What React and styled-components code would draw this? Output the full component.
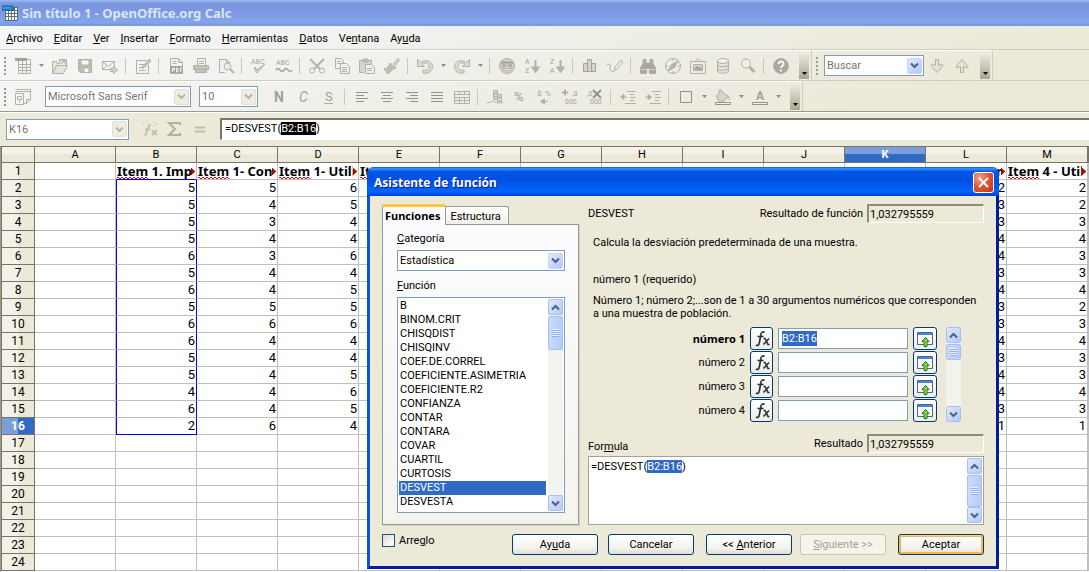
import { Fragment } from 'react';
import styled, { createGlobalStyle, css } from 'styled-components';

const GlobalStyle = createGlobalStyle`
  * {
    box-sizing: border-box;
  }

  body {
    margin: 0;
    background: #fff;
  }

  body, button, input, select, textarea {
    font-family: Roboto, 'Noto Sans', sans-serif;
    font-size: 11px;
    color: #000;
  }

  b {
    font-family: 'Noto Sans', sans-serif;
  }
`;

const boldFace = css`
  font-family: 'Noto Sans', sans-serif;
  font-weight: 700;
`;

const Page = styled.div`
  position: relative;
  display: flex;
  flex-direction: column;
  height: 100vh;
  overflow: hidden;
  cursor: default;
`;

/* ---------- window chrome ---------- */

const TitleBar = styled.header`
  display: flex;
  align-items: center;
  gap: 4px;
  flex: none;
  height: 26px;
  padding: 0 2px;
  background: linear-gradient(#9db9f0, #7a96df 14%, #7d98e2 45%, #82a6e8 85%, #7b94dc);
  color: #dce4f8;
  ${boldFace}
  font-size: 13px;
`;

const Chrome = styled.div`
  flex: none;
  background: linear-gradient(160deg, #f6f7f8 0%, #f0f0ec 35%, #ece9d8 80%);
`;

const MenuBar = styled.nav`
  display: flex;
  align-items: center;
  gap: 11px;
  height: 23px;
  padding: 1px 6px 0;
`;

const MenuLink = styled.a`
  color: #000;
  text-decoration: none;
`;

const ToolRow = styled.div`
  display: flex;
  border-top: 1px solid #d0ccc0;
`;

const Toolbar = styled.div`
  display: flex;
  align-items: center;
  height: 30px;
  padding-right: 2px;
  border-top: 1px solid #fff;
  border-right: 1px solid #d0ccc0;
`;

const Grip = styled.span`
  width: 2px;
  height: 18px;
  margin: 0 4px;
  background: repeating-linear-gradient(#9c9a8c 0 2px, transparent 2px 4px);
`;

const ToolButton = styled.button`
  display: flex;
  align-items: center;
  justify-content: center;
  flex: none;
  width: ${({ $narrow }) => ($narrow ? '12px' : '25px')};
  height: 24px;
  padding: 0;
  border: none;
  background: none;
`;

const Divider = styled.span`
  width: 1px;
  height: 16px;
  margin: 0 4px 0 3px;
  background: #cfc6b8;
`;

const Overflow = styled.button`
  display: flex;
  align-items: flex-end;
  justify-content: center;
  width: 10px;
  height: 26px;
  margin-left: 6px;
  padding: 0 0 4px;
  border: none;
  background: linear-gradient(#eeebdd, #a9a695);
`;

const Combo = styled.span`
  display: flex;
  align-items: center;
  flex: none;
  width: ${({ $width }) => $width};
  height: 21px;
  padding: 1px;
  margin: ${({ $margin }) => $margin || '0'};
  border: 1px solid #7f9db9;
  background: #fff;

  select {
    flex: 1;
    min-width: 0;
    height: 17px;
    padding: 0 1px;
    border: none;
    outline: none;
    appearance: none;
    background: none;
    color: ${({ $muted }) => ($muted ? '#77766e' : '#000')};
  }
`;

const arrowLook = {
  blue: css`
    border: 1px solid #c4d4fb;
    background: linear-gradient(135deg, #e1eafe, #aec8f7);
    color: #4d6185;
  `,
  gray: css`
    border: 1px solid #e2e0d4;
    background: #efede2;
    color: #b9b6a6;
  `,
};

const ArrowBox = styled.span`
  display: flex;
  align-items: center;
  justify-content: center;
  flex: none;
  width: 15px;
  height: 16px;
  border-radius: 2px;
  ${({ $look }) => arrowLook[$look]}
`;

const FormulaBar = styled.div`
  display: flex;
  align-items: center;
  height: 35px;
  padding-left: 6px;
  border-top: 1px solid #9c9a8c;
  background: #ece9d8;
  box-shadow: inset 0 1px #fff;
`;

const FormulaField = styled.span`
  display: grid;
  flex: 1;
  height: 22px;
  margin-left: 8px;
  padding-left: 2px;
  border-top: 2px solid #77756a;
  border-left: 2px solid #77756a;
  border-bottom: 1px solid #fff;
  background: #fff;
`;

/* ---------- text with a highlighted range ---------- */

const Mirror = styled.span`
  grid-area: 1 / 1;
  padding: 1px;
  line-height: 15px;

  mark {
    display: inline-block;
    height: 13px;
    line-height: 13px;
    background: ${({ $mark }) => $mark};
    color: #fff;
  }
`;

const clearEditor = css`
  grid-area: 1 / 1;
  min-width: 0;
  padding: 1px;
  border: none;
  outline: none;
  background: none;
  color: transparent;
  line-height: 15px;
`;

const ClearInput = styled.input`
  ${clearEditor}
`;

const ClearTextarea = styled.textarea`
  ${clearEditor}
  resize: none;
  overflow: hidden;
`;

/* ---------- sheet ---------- */

const SheetWrap = styled.main`
  flex: 1;
  min-height: 0;
  overflow: hidden;
  border-left: 1px solid #9c9a8c;
`;

const Sheet = styled.table`
  width: 100%;
  table-layout: fixed;
  border-collapse: separate;
  border-spacing: 0;
  border-left: 1px solid #77756a;
`;

const ColHead = styled.th`
  width: ${({ $width }) => $width};
  height: 17px;
  padding: 1px 0 0;
  border-top: 1px solid #77756a;
  border-right: 1px solid #77756a;
  border-bottom: 1px solid #77756a;
  background: ${({ $on }) =>
    $on ? 'linear-gradient(#7b9fdb 50%, #316ac5 50%)' : 'linear-gradient(#f4f2e8 50%, #ece9d8 50%)'};
  color: ${({ $on }) => ($on ? '#fff' : '#000')};
  font-weight: ${({ $on }) => ($on ? 700 : 400)};
  line-height: 14px;
`;

const RowHead = styled.th`
  height: 17px;
  padding: 1px 0 0;
  border-right: 1px solid #77756a;
  border-bottom: 1px solid #77756a;
  background: ${({ $on }) =>
    $on ? 'linear-gradient(90deg, #7b9fdb 50%, #316ac5 50%)' : 'linear-gradient(90deg, #f4f2e8 50%, #ece9d8 50%)'};
  color: ${({ $on }) => ($on ? '#fff' : '#000')};
  font-size: 12px;
  font-weight: ${({ $on }) => ($on ? 700 : 400)};
  line-height: 15px;
`;

const rangeEdge = '1px solid #0000f0';

const Cell = styled.td`
  height: 17px;
  padding: 0 1px;
  overflow: hidden;
  border-right: 1px solid #c0c0c0;
  border-bottom: 1px solid #c0c0c0;
  font-size: 13px;
  line-height: 16px;
  text-align: right;
  white-space: nowrap;

  ${({ $range }) =>
    $range &&
    css`
      border-right: ${rangeEdge};
      border-left: ${rangeEdge};
    `}
  ${({ $edge }) => $edge && css`border-bottom: ${rangeEdge};`}
`;

const Clipped = styled.div`
  display: flex;
  align-items: center;
  justify-content: space-between;
  ${boldFace}
  font-size: 13px;

  > span {
    min-width: 0;
    height: 16px;
    overflow: hidden;
  }

  /* red spelling zigzag */
  u {
    display: inline-block;
    height: 16px;
    text-decoration: none;
    background:
      repeating-linear-gradient(90deg, #e00000 0 2px, transparent 2px 4px) 0 14px / 100% 1px no-repeat,
      repeating-linear-gradient(90deg, transparent 0 2px, #e00000 2px 4px) 0 15px / 100% 1px no-repeat;
  }

  svg {
    flex: none;
  }
`;

/* ---------- wizard dialog ---------- */

const Dialog = styled.section`
  position: absolute;
  top: 167px;
  left: 367px;
  width: 632px;
  border: solid #0831d9;
  border-color: #0855dd #001da0 #001da0 #0855dd;
  border-width: 0 3px 3px;
  border-radius: 7px 7px 0 0;
  background: #ece9d8;
`;

const DialogTitle = styled.header`
  display: flex;
  align-items: center;
  justify-content: space-between;
  height: 29px;
  margin: 0 -3px;
  padding: 2px 5px 0 7px;
  border-radius: 7px 7px 0 0;
  background: linear-gradient(#0058ee, #3593ff 6%, #0355e5 16%, #0050e0 45%, #0066ff 85%, #003dd7);
  color: #fff;
  text-shadow: 1px 1px #0f1089;

  h1 {
    margin: 0;
    ${boldFace}
    font-size: 12px;
  }
`;

const CloseButton = styled.button`
  display: flex;
  align-items: center;
  justify-content: center;
  width: 21px;
  height: 21px;
  padding: 0;
  border: 1px solid #fff;
  border-radius: 3px;
  background: radial-gradient(circle at 30% 25%, #f0a58c, #e2573a 45%, #c43314);
`;

const DialogBody = styled.div`
  display: grid;
  grid-template-columns: 197px 1fr;
  column-gap: 9px;
  padding: 8px 12px 11px;
`;

const Tabs = styled.div`
  display: flex;
  align-items: flex-end;
  height: 20px;
`;

const Tab = styled.button`
  height: 18px;
  padding: 1px 7px 0 4px;
  border: 1px solid #919b9c;
  border-left: none;
  border-bottom: none;
  border-radius: 0 3px 0 0;
  background: linear-gradient(#fff, #f0efe6);

  ${({ $active }) =>
    $active &&
    css`
      height: 21px;
      margin-bottom: -1px;
      padding: 0 5px 2px 2px;
      border-left: 1px solid #919b9c;
      border-top: 3px solid #ffc73c;
      border-radius: 3px 3px 0 0;
      background: #fcfcfe;
      ${boldFace}
    `}
`;

const TabPanel = styled.div`
  display: flex;
  flex-direction: column;
  height: 301px;
  padding: 4px 13px 11px 14px;
  border: 1px solid #919b9c;
  background: linear-gradient(#fcfcfe, #f4f3ee);
  box-shadow: 1px 1px #d5d2c3;
`;

const Label = styled.label`
  padding: ${({ $space }) => $space};
  line-height: 20px;
`;

const ListFrame = styled.div`
  display: flex;
  flex: 1;
  min-height: 0;
  padding: 1px;
  border: 1px solid #7f9db9;
  background: #fff;
`;

const List = styled.select`
  flex: 1;
  min-width: 0;
  margin-right: 2px;
  padding: 0;
  border: none;
  outline: none;
  overflow: hidden;
  scrollbar-width: none;
  background: #fff;

  option {
    height: 14px;
    min-height: 14px;
    padding: 0 1px;
    line-height: 15px;
  }

  option:checked {
    background: linear-gradient(#316ac5, #316ac5);
    -webkit-text-fill-color: #fff;
  }
`;

const Track = styled.div`
  display: flex;
  flex-direction: column;
  flex: none;
  width: 15px;
  background: #f3f3ee;
`;

const Thumb = styled.span`
  display: flex;
  align-items: center;
  justify-content: center;
  height: ${({ $height }) => $height};
  margin: 1px 0 auto;
  border: 1px solid #a9c0ee;
  border-radius: 2px;
  background: linear-gradient(90deg, #cbdafd, #b5cbfb);

  &::before {
    content: '';
    width: 7px;
    height: 8px;
    background: repeating-linear-gradient(#eef4fe 0 1px, #8cb0f8 1px 2px);
  }
`;

const ScrollButton = styled.button`
  display: flex;
  align-items: center;
  justify-content: center;
  flex: none;
  height: 16px;
  padding: 0;
  border: 1px solid #a9c0ee;
  border-radius: 2px;
  background: linear-gradient(135deg, #dfe9fe, #b3caf8);
  color: #4d6185;
`;

const Details = styled.div`
  display: flex;
  flex-direction: column;
`;

const Paragraph = styled.p`
  margin: 0;
  padding: ${({ $above }) => $above} 0 0 5px;
  line-height: 13px;
`;

const ResultRow = styled.div`
  display: flex;
  align-items: ${({ $align }) => $align || 'center'};
  justify-content: space-between;
`;

const Result = styled.label`
  display: flex;
  align-items: center;
  gap: 4px;

  input {
    width: 117px;
    height: 19px;
    padding: 0 1px;
    border: 1px solid;
    border-width: 2px 1px 1px 2px;
    border-color: #8f8c7e #fff #fff #8f8c7e;
    outline: none;
    background: #ece9d8;
  }
`;

const Arguments = styled.div`
  display: flex;
  gap: 9px;
  margin: 7px 23px 12px 0;
`;

const ArgumentGrid = styled.div`
  display: grid;
  flex: 1;
  grid-template-columns: 1fr 23px 130px 24px;
  align-items: center;
  gap: 1px 5px;

  label {
    text-align: right;
  }
`;

const IconButton = styled.button`
  display: flex;
  align-items: center;
  justify-content: center;
  height: 23px;
  padding: 0;
  border: 1px solid #003c74;
  border-radius: 3px;
  background: linear-gradient(#fff, #ecebe5);
`;

const ArgumentField = styled.span`
  display: flex;
  height: 21px;
  padding: 2px 3px;
  border: 1px solid #7f9db9;
  background: #fff;

  input {
    flex: 1;
    min-width: 0;
    padding: 0;
    border: none;
    outline: none;
    background: none;
  }

  ${({ $selected }) =>
    $selected &&
    css`
      input {
        flex: none;
        field-sizing: content;
        background: #316ac5;
        color: #fff;
      }
    `}
`;

const FormulaBox = styled.div`
  display: flex;
  flex: 1;
  min-height: 0;
  margin-top: 3px;
  padding: 1px;
  border: 1px solid #a5a295;
  background: #fff;

  > span {
    display: grid;
    flex: 1;
  }
`;

const Footer = styled.footer`
  grid-column: 1 / -1;
  display: flex;
  align-items: center;
  gap: 12px;
  padding-top: 9px;
`;

const CheckLabel = styled.label`
  display: flex;
  align-items: center;
  align-self: flex-start;
  gap: 4px;
  margin-right: auto;

  input {
    width: 13px;
    height: 13px;
    margin: 0;
    appearance: none;
    border: 1px solid #1c5180;
    background: linear-gradient(135deg, #dcdcd7, #fff);
  }
`;

const ButtonPair = styled.div`
  display: flex;
  gap: ${({ $gap }) => $gap};
`;

const PushButton = styled.button`
  width: 86px;
  height: 21px;
  padding: 0;
  border: 1px solid #003c74;
  border-radius: 3px;
  background: linear-gradient(#fff, #f3f2ed 70%, #dedbcf);

  ${({ $primary }) => $primary && css`box-shadow: inset 0 1px #fcd27c, inset 0 0 0 2px #f7b548, inset 0 -2px #e59700;`}

  &:disabled {
    border-color: #c9c7ba;
    background: #f5f4ea;
    color: #a1a192;
  }
`;

/* ---------- icons ---------- */

const ICONS = {
  newSheet: (
    <>
      <path d="M1 1h12v3H1z" fill="#a5a39a" stroke="none" />
      <path d="M4.500 4v12.500h12V2.500H13M4.500 7.500h12M4.500 10.500h12M4.500 13.500h12M8.500 4v12.500M12.500 4v12.500" />
    </>
  ),
  open: <path d="M1.500 16.500V4.500h4l1 2h3M1.500 16.500l4-8h11l-4 8zM8.500 5.500V2.500h7v6M10 6.500l4-3M11 3.500h3v3" fill="#e4e2d9" />,
  save: (
    <>
      <path d="M2.500 2.500h13v13h-11l-2-2z" fill="#bdbbb2" />
      <path d="M5 3h8v5H5zM6 11h7v4.500H6z" fill="#fafaf6" />
      <path d="M7.500 12v3" strokeWidth="2" />
    </>
  ),
  mail: (
    <>
      <path d="M1.500 4.500h12v8h-12zM1.500 4.500l6 5 6-5M1.500 12.500l4-4" />
      <path d="M9.500 11.500h3v-2l4 3.500-4 3.500v-2h-3z" fill="#d5d3ca" />
    </>
  ),
  edit: (
    <>
      <path d="M2.500 3.500h10M2.500 3.500v13h12V8M5 7.500h5M5 10.500h3M5 13.500h7" />
      <path d="M8 12l1-3 6-7 2 2-6 6z" fill="#c9c8c0" />
    </>
  ),
  pdf: (
    <>
      <path d="M3.500 1.500h8l4 4v11h-12zM11.500 1.500v4h4M5.500 4.500h4M5.500 6.500h4" />
      <path d="M3 9h13v7H3z" fill="#a5a39a" stroke="none" />
      <path d="M5.500 15v-4h2v2h-2M9.500 11v4h1l1-2-1-2zM13.500 15v-4h2" stroke="#f4f3ee" />
    </>
  ),
  print: (
    <>
      <path d="M5.500 8V1.500h8V8" />
      <path d="M1.500 8.500h15v4h-15zM3.500 12.500h11v3h-11z" fill="#c4c2b9" />
      <path d="M7 4.500h5M7 6.500h5" />
    </>
  ),
  preview: (
    <>
      <path d="M8 15.500H2.500v-13h7l3 3M9.500 2.500v3h3" />
      <circle cx="10.500" cy="9.500" r="3.500" fill="#eceae2" />
      <path d="M13 12l4 4" strokeWidth="2" />
    </>
  ),
  spell: (
    <>
      <text x="1" y="7">ABC</text>
      <path d="M4 11l3 5 8-9-7 5-1 1-2-3z" fill="#d2d0c8" />
    </>
  ),
  autoSpell: (
    <>
      <text x="1" y="8">ABC</text>
      <path d="M1 13q2-3 4 0t4 0 4 0 4 0" strokeWidth="2" />
    </>
  ),
  cut: (
    <>
      <path d="M2 2l10 10M16 2L6 12" strokeWidth="2" />
      <circle cx="4" cy="13.500" r="2.500" />
      <circle cx="14" cy="13.500" r="2.500" />
    </>
  ),
  copy: (
    <>
      <path d="M2.500 1.500h6l2 2v8h-8zM4 4.500h4M4 6.500h4" />
      <path d="M7.500 6.500h6l3 3v7h-9z" fill="#f1f0ea" />
      <path d="M9 10.500h5M9 12.500h5M9 14.500h5" />
    </>
  ),
  paste: (
    <>
      <path d="M6 15.500H1.500v-12h12V7" fill="#d5d3ca" />
      <path d="M5 2h5v3H5z" fill="#c4c2b9" />
      <path d="M7.500 7.500h6l3 3v6h-9z" fill="#f1f0ea" />
      <path d="M9 11.500h5M9 13.500h5" />
    </>
  ),
  brush: (
    <>
      <path d="M10 7l5-5.500 1.500 1.500L12 9" fill="#d5d3ca" />
      <path d="M7 6l6 5-3 1-5 5-4-5c3 0 5-3 6-6z" fill="#c4c2b9" />
      <path d="M4 12l3 2M6 10l3 2" />
    </>
  ),
  undo: <path d="M1.500 2.500v7h7l-2.500-2.500c3-2 7-1 7 2.500s-3 4.500-6 3.500v3c6 1 9.500-2 9.500-6.500s-6-8-12-4z" fill="#dddbd2" />,
  redo: <path d="M16.500 2.500v7h-7l2.500-2.500c-3-2-7-1-7 2.500s3 4.500 6 3.500v3c-6 1-9.500-2-9.500-6.500s6-8 12-4z" fill="#dddbd2" />,
  globe: (
    <>
      <circle cx="9" cy="9" r="7.500" fill="#d0cec5" />
      <path d="M3 5.500h12M4 8.500h4M10 8.500h4" strokeWidth="2" stroke="#a5a39a" />
      <path d="M4.500 11.500h9c0 3-9 3-9 0z" fill="#f1f0ea" />
    </>
  ),
  sortAsc: (
    <>
      <text x="2" y="7">A</text>
      <text x="2" y="16">Z</text>
      <path d="M12.500 3v10M9.500 10.500l3 4 3-4z" fill="#a5a39a" strokeWidth="2" />
    </>
  ),
  sortDesc: (
    <>
      <text x="2" y="7">Z</text>
      <text x="2" y="16">A</text>
      <path d="M12.500 3v10M9.500 10.500l3 4 3-4z" fill="#a5a39a" strokeWidth="2" />
    </>
  ),
  chart: <path d="M2.500 6.500h4v8h-4zM6.500 2.500h4v12h-4zM10.500 6.500h4v8h-4z" fill="#d5d3ca" stroke="#a5a39a" />,
  draw: <path d="M1 8c3-2 4 0 3 3s3 4 5 3M8 13l1-3 6-7 2 2-6 7z" />,
  find: (
    <>
      <path d="M4 2.500h3V6h4V2.500h3v4l2.500 4v6h-6v-5h-3v5h-6v-6l2.500-4z" fill="#a9a79d" />
      <path d="M2 12.500h5M11 12.500h5" stroke="#d5d3ca" />
    </>
  ),
  compass: (
    <>
      <circle cx="9" cy="9" r="7.500" />
      <path d="M14 4l-3.500 6.500L4 14l3.500-6.500z" fill="#b5b3a9" />
      <path d="M9 2v2M9 14v2M2 9h2M14 9h2" />
    </>
  ),
  gallery: (
    <>
      <path d="M6 4.500l3-3 3 3M1.500 4.500h15v12h-15z" />
      <path d="M4.500 7.500h9v6h-9z" fill="#d5d3ca" />
      <path d="M5 12l3-3 2 2 1-1 3 3z" fill="#a5a39a" />
    </>
  ),
  data: (
    <>
      <path d="M3.500 4v10c0 3 11 3 11 0V4" fill="#e4e2d9" />
      <ellipse cx="9" cy="4" rx="5.500" ry="2.500" fill="#f1f0ea" />
      <path d="M3.500 7.500c0 3 11 3 11 0M3.500 11c0 3 11 3 11 0" />
    </>
  ),
  zoom: (
    <>
      <circle cx="7" cy="6.500" r="4.500" fill="#efeee7" />
      <path d="M10.500 10l5 5" strokeWidth="3" />
    </>
  ),
  help: (
    <>
      <circle cx="9" cy="9" r="7.500" fill="#aaa89e" />
      <path d="M6.500 7c0-3.500 5.500-3 5 0 0 1.500-2.500 2-2.500 4M9 12.500v2" stroke="#f7f6f0" strokeWidth="2" />
    </>
  ),
  down: <path d="M7.500 2.500h3v6l3.500-1.500 1 1.500-6 7-6-7 1-1.500 3.500 1.500z" fill="#e4e2d9" />,
  up: <path d="M7.500 15.500h3v-6l3.500 1.500 1-1.500-6-7-6 7 1 1.500 3.500-1.500z" fill="#e4e2d9" />,
  styles: <path d="M1.500 1.500h15v10l-4 4h-3M16.500 11.500h-4v4M1.500 5.500h8v11h-8zM1.500 3.500h15M3.500 8.500h4v3h-4zM5.500 11.500v3" />,
  bold: <text x="4" y="14" fontSize="14" fontWeight="700">N</text>,
  italic: <text x="4" y="14" fontSize="14" fontStyle="italic">C</text>,
  underline: (
    <>
      <text x="5" y="13" fontSize="13">S</text>
      <path d="M4 15.500h9" />
    </>
  ),
  left: <path d="M3 4.500h12M3 7.500h8M3 10.500h12M3 13.500h8" stroke="#94928a" />,
  center: <path d="M3 4.500h12M5 7.500h8M3 10.500h12M5 13.500h8" stroke="#94928a" />,
  right: <path d="M3 4.500h12M7 7.500h8M3 10.500h12M7 13.500h8" stroke="#94928a" />,
  justify: <path d="M3 4.500h12M3 7.500h12M3 10.500h12M3 13.500h12" stroke="#94928a" />,
  merge: <path d="M1.500 3.500h15v12h-15zM1.500 6.500h15M1.500 9.500h15M1.500 12.500h15M6.500 3.500v3M11.500 3.500v3M6.500 9.500v6M11.500 9.500v6" />,
  currency: (
    <>
      <path d="M7.500 2.500h4v9h-4zM11.500 6.500h4v7h-4z" fill="#d5d3ca" />
      <path d="M1 15c3 0 5-3 8-1s5 0 8 1M8 5.500h3M8 8.500h3M12 9.500h3" />
    </>
  ),
  percent: <text x="3" y="13" fontSize="13">%</text>,
  standard: (
    <>
      <text x="1" y="8" fontSize="8">$</text>
      <text x="9" y="8" fontSize="8">%</text>
      <path d="M12 13.500H6M8.500 11l-4 2.500 4 2.500z" fill="#b5b3a9" />
    </>
  ),
  addDecimal: (
    <>
      <path d="M1 4.500h6M4 1.500v6" strokeWidth="2" />
      <text x="11" y="8">,0</text>
      <text x="4" y="16">000</text>
    </>
  ),
  dropDecimal: (
    <>
      <path d="M7 2l8 8M15 2l-8 8" strokeWidth="2" stroke="#94928a" />
      <text x="1" y="8">,0</text>
      <text x="4" y="16">000</text>
    </>
  ),
  indentLess: <path d="M8 3.500h9M11 6.500h4M11 9.500h6M11 12.500h4M6 15.500h11M8 9H2M5 6.500L1.500 9 5 11.500z" fill="#b5b3a9" />,
  indentMore: <path d="M8 3.500h9M11 6.500h4M11 9.500h6M11 12.500h4M6 15.500h11M7 9H1M4 6.500L7.500 9 4 11.500z" fill="#b5b3a9" />,
  border: <path d="M3.500 3.500h11v11h-11z" stroke="#94928a" />,
  fill: (
    <>
      <path d="M2.500 8l5-5 7 6-5 4h-5z" fill="#d5d3ca" />
      <path d="M5 5V2q2-2 3 1M13 7q4 2 2 5" />
      <path d="M1.500 14.500h15v2h-15z" fill="#f4f3ee" stroke="#94928a" />
    </>
  ),
  color: (
    <>
      <text x="5" y="12" fontSize="12" fontWeight="700">A</text>
      <path d="M1.500 14.500h15v2h-15z" fill="#f4f3ee" stroke="#94928a" />
    </>
  ),
  wizard: (
    <>
      <path d="M4 16L9 4M4 9.500h5M11 10l5 5M16 10l-5 5" strokeWidth="2" stroke="#c3c0b1" />
      <path d="M2 3h1M5 1h1M12 2h1M15 4h1M13 6h1" />
    </>
  ),
  sum: <path d="M14 5V3H3l6 6-6 6h11v-2" strokeWidth="2" />,
  equals: <path d="M4 7.500h10M4 11.500h10" strokeWidth="2" stroke="#c3c0b1" />,
};

const IconSvg = styled.svg`
  width: 18px;
  height: 18px;
  fill: none;
  stroke: #b3b1a7;

  text {
    fill: #a3a197;
    stroke: none;
  }
`;

function Icon({ name }) {
  return (
    <IconSvg viewBox="0 0 18 18" fontSize="7" aria-hidden="true">
      {ICONS[name]}
    </IconSvg>
  );
}

function Chevron({ up }) {
  return (
    <svg width="9" height="7" viewBox="0 0 9 7" fill="none" stroke="currentColor" strokeWidth="2" aria-hidden="true">
      <path d={up ? 'M1 5.500l3.500-3.500L8 5.500' : 'M1 1.500L4.500 5 8 1.500'} />
    </svg>
  );
}

function Triangle({ color = '#8f8d83' }) {
  return (
    <svg width="5" height="3" viewBox="0 0 5 3" aria-hidden="true">
      <path d="M0 0h5L2.500 3z" fill={color} />
    </svg>
  );
}

function CalcLogo() {
  return (
    <svg width="16" height="18" viewBox="0 0 16 18" aria-hidden="true">
      <path d="M3 3h13v14H3z" fill="#5c6b84" />
      <path d="M4 7h2v2H4zM7 7h2v2H7zM10 7h2v2h-2zM13 7h2v2h-2zM4 10h2v2H4zM7 10h2v2H7zM10 10h2v2h-2zM13 10h2v2h-2zM4 13h2v3H4zM7 13h2v3H7zM10 13h2v3h-2zM13 13h2v3h-2zM13 4h2v2h-2z" fill="#fff" />
      <path d="M0 2h11v4H0z" fill="#2a9ad8" stroke="#0c5d94" />
    </svg>
  );
}

function FxIcon() {
  return (
    <svg width="18" height="18" viewBox="0 0 18 18" fill="none" stroke="#222f3c" aria-hidden="true">
      <path d="M11.500 2.500c-2-1.500-3.200 0-3.700 2.500L6.300 13c-.5 2.500-1.800 3-3.300 2M4.500 6.500h6" strokeWidth="1.600" />
      <path d="M10.500 8.500h1.500l3 6h1.500M16 8.500l-5.500 6" strokeWidth="1.600" />
    </svg>
  );
}

function ShrinkIcon() {
  return (
    <svg width="18" height="18" viewBox="0 0 18 18" aria-hidden="true">
      <path d="M1.500 2.500h15v12h-15z" fill="#f7f8fa" stroke="#56657a" />
      <path d="M2 3h14v2H2z" fill="#3f87f0" />
      <path d="M9.500 7.500l3.500 4h-2v5h-3v-5H6z" fill="#8fd63c" stroke="#1f7a12" />
    </svg>
  );
}

/* ---------- data ---------- */

const MENUS = [
  ['', 'A', 'rchivo'],
  ['', 'E', 'ditar'],
  ['', 'V', 'er'],
  ['', 'I', 'nsertar'],
  ['', 'F', 'ormato'],
  ['', 'H', 'erramientas'],
  ['', 'D', 'atos'],
  ['Ve', 'n', 'tana'],
  ['Ay', 'u', 'da'],
];

// '|' is a divider and 'v' the small arrow of a split button
const STANDARD_TOOLS =
  'newSheet v open save mail | edit | pdf print preview | spell autoSpell | cut copy paste brush | undo v redo v | globe sortAsc sortDesc | chart draw | find compass gallery data zoom | help'.split(' ');

const FORMAT_TOOLS =
  'bold italic underline | left center right justify merge | currency percent standard addDecimal dropDecimal | indentLess indentMore | border v fill v color v'.split(' ');

const COLUMNS = 'ABCDEFGHIJKLM'.split('');

const HEADINGS = {
  B: ' 1. Imp',
  C: ' 1- Con',
  D: ' 1- Utili',
  E: '',
  L: ' 4 - Cor',
  M: ' 4 - Util',
};

const VALUES = {
  B: [5, 5, 5, 5, 6, 5, 6, 5, 6, 6, 5, 5, 4, 6, 2],
  C: [5, 4, 3, 4, 3, 4, 4, 5, 6, 4, 4, 4, 4, 4, 6],
  D: [6, 5, 4, 4, 6, 4, 5, 5, 6, 4, 4, 5, 6, 5, 4],
  L: [2, 3, 3, 4, 4, 3, 4, 3, 3, 4, 3, 4, 4, 3, 1],
  M: [2, 2, 3, 4, 3, 3, 4, 2, 3, 4, 3, 3, 4, 3, 1],
};

const FUNCTIONS = [
  'B',
  'BINOM.CRIT',
  'CHISQDIST',
  'CHISQINV',
  'COEF.DE.CORREL',
  'COEFICIENTE.ASIMETRIA',
  'COEFICIENTE.R2',
  'CONFIANZA',
  'CONTAR',
  'CONTARA',
  'COVAR',
  'CUARTIL',
  'CURTOSIS',
  'DESVEST',
  'DESVESTA',
];

/* ---------- parts ---------- */

function Tools({ items }) {
  return items.map((item, i) => {
    if (item === '|') return <Divider key={i} />;
    if (item === 'v') {
      return (
        <ToolButton key={i} $narrow aria-label="Más opciones">
          <Triangle />
        </ToolButton>
      );
    }
    return (
      <ToolButton key={i} aria-label={item}>
        <Icon name={item} />
      </ToolButton>
    );
  });
}

function ComboBox({ id, label, value, width, margin, look = 'gray', muted }) {
  return (
    <Combo $width={width} $margin={margin} $muted={muted}>
      <select id={id} aria-label={label} defaultValue={value}>
        <option>{value}</option>
      </select>
      <ArrowBox $look={look}>
        <Chevron />
      </ArrowBox>
    </Combo>
  );
}

function Scroller({ thumb }) {
  return (
    <Track>
      <ScrollButton aria-label="Subir">
        <Chevron up />
      </ScrollButton>
      <Thumb $height={thumb} />
      <ScrollButton aria-label="Bajar">
        <Chevron />
      </ScrollButton>
    </Track>
  );
}

function Heading({ text }) {
  return (
    <Clipped>
      <span>
        <u>Item</u>
        {text}
      </span>
      <svg width="4" height="7" viewBox="0 0 4 7" aria-hidden="true">
        <path d="M0 0l4 3.500L0 7z" fill="#d00000" stroke="#300" strokeWidth="0.500" />
      </svg>
    </Clipped>
  );
}

function SheetTable() {
  const rows = Array.from({ length: 24 }, (_, i) => i + 1);

  return (
    <SheetWrap>
      <Sheet>
        <thead>
          <tr>
            <ColHead $width="33px" />
            {COLUMNS.map((c) => (
              <ColHead key={c} $width="81px" $on={c === 'K'}>
                {c}
              </ColHead>
            ))}
            <ColHead />
          </tr>
        </thead>
        <tbody>
          {rows.map((r) => (
            <tr key={r}>
              <RowHead $on={r === 16}>{r}</RowHead>
              {COLUMNS.map((c) => (
                <Cell
                  key={c}
                  $range={c === 'B' && r > 1 && r < 17}
                  $edge={c === 'B' && (r === 1 || r === 16)}
                >
                  {r === 1 && c in HEADINGS ? <Heading text={HEADINGS[c]} /> : VALUES[c]?.[r - 2]}
                </Cell>
              ))}
              <Cell />
            </tr>
          ))}
        </tbody>
      </Sheet>
    </SheetWrap>
  );
}

function FunctionWizard() {
  return (
    <Dialog role="dialog" aria-labelledby="wizard-title">
      <DialogTitle>
        <h1 id="wizard-title">Asistente de función</h1>
        <CloseButton aria-label="Cerrar">
          <svg width="13" height="13" viewBox="0 0 13 13" stroke="#fff" strokeWidth="2" aria-hidden="true">
            <path d="M2 2l9 9M11 2l-9 9" />
          </svg>
        </CloseButton>
      </DialogTitle>

      <DialogBody>
        <div>
          <Tabs>
            <Tab $active>Funciones</Tab>
            <Tab>Estructura</Tab>
          </Tabs>
          <TabPanel>
            <Label htmlFor="category" $space="0 0 1px">
              <u>C</u>ategoría
            </Label>
            <ComboBox id="category" label="Categoría" value="Estadística" width="100%" look="blue" />
            <Label htmlFor="functions" $space="5px 0 1px">
              <u>F</u>unción
            </Label>
            <ListFrame>
              <List id="functions" size={15} defaultValue="DESVEST">
                {FUNCTIONS.map((f) => (
                  <option key={f}>{f}</option>
                ))}
              </List>
              <Scroller thumb="34px" />
            </ListFrame>
          </TabPanel>
        </div>

        <Details>
          <ResultRow>
            <span>DESVEST</span>
            <Result>
              Resultado de función
              <input readOnly defaultValue="1,032795559" />
            </Result>
          </ResultRow>
          <Paragraph $above="13px">Calcula la desviación predeterminada de una muestra.</Paragraph>
          <Paragraph $above="24px">número 1 (requerido)</Paragraph>
          <Paragraph $above="8px">
            Número 1; número 2;...son de 1 a 30 argumentos numéricos que corresponden a una muestra de población.
          </Paragraph>

          <Arguments>
            <ArgumentGrid>
              {[1, 2, 3, 4].map((n) => (
                <Fragment key={n}>
                  <label htmlFor={`arg-${n}`}>{n === 1 ? <b>número 1</b> : `número ${n}`}</label>
                  <IconButton aria-label="Función">
                    <FxIcon />
                  </IconButton>
                  <ArgumentField $selected={n === 1}>
                    <input id={`arg-${n}`} defaultValue={n === 1 ? 'B2:B16' : ''} />
                  </ArgumentField>
                  <IconButton aria-label="Reducir">
                    <ShrinkIcon />
                  </IconButton>
                </Fragment>
              ))}
            </ArgumentGrid>
            <Scroller thumb="16px" />
          </Arguments>

          <ResultRow $align="flex-end">
            <label htmlFor="formula">
              For<u>m</u>ula
            </label>
            <Result>
              Resultado
              <input readOnly defaultValue="1,032795559" />
            </Result>
          </ResultRow>
          <FormulaBox>
            <span>
              <Mirror $mark="#316ac5" aria-hidden="true">
                =DESVEST(<mark>B2:B16</mark>)
              </Mirror>
              <ClearTextarea id="formula" defaultValue="=DESVEST(B2:B16)" />
            </span>
            <Scroller thumb="32px" />
          </FormulaBox>
        </Details>

        <Footer>
          <CheckLabel>
            <input type="checkbox" />
            <span>
              Arre<u>g</u>lo
            </span>
          </CheckLabel>
          <ButtonPair $gap="10px">
            <PushButton>
              Ay<u>u</u>da
            </PushButton>
            <PushButton>Cancelar</PushButton>
          </ButtonPair>
          <ButtonPair $gap="8px">
            <PushButton>
              &lt;&lt; <u>A</u>nterior
            </PushButton>
            <PushButton disabled>
              <u>S</u>iguiente &gt;&gt;
            </PushButton>
          </ButtonPair>
          <PushButton $primary>Aceptar</PushButton>
        </Footer>
      </DialogBody>
    </Dialog>
  );
}

export default function App() {
  return (
    <Page>
      <GlobalStyle />
      <TitleBar>
        <CalcLogo />
        Sin título 1 - OpenOffice.org Calc
      </TitleBar>

      <Chrome>
        <MenuBar>
          {MENUS.map(([before, key, after]) => (
            <MenuLink key={key + after} href="#">
              {before}
              <u>{key}</u>
              {after}
            </MenuLink>
          ))}
        </MenuBar>
        <ToolRow>
          <Toolbar>
            <Grip />
            <Tools items={STANDARD_TOOLS} />
            <Overflow aria-label="Más botones">
              <Triangle color="#000" />
            </Overflow>
          </Toolbar>
          <Toolbar>
            <Grip />
            <ComboBox label="Buscar" value="Buscar" width="100px" margin="0 0 0 2px" look="blue" muted />
            <ToolButton aria-label="Siguiente">
              <Icon name="down" />
            </ToolButton>
            <ToolButton aria-label="Anterior">
              <Icon name="up" />
            </ToolButton>
            <Overflow aria-label="Más botones">
              <Triangle color="#000" />
            </Overflow>
          </Toolbar>
        </ToolRow>
        <ToolRow>
          <Toolbar>
            <Grip />
            <Tools items={['styles']} />
            <ComboBox label="Fuente" value="Microsoft Sans Serif" width="146px" margin="0 8px 0 10px" muted />
            <ComboBox label="Tamaño" value="10" width="59px" margin="0 8px 0 0" muted />
            <Tools items={FORMAT_TOOLS} />
            <Overflow aria-label="Más botones">
              <Triangle color="#000" />
            </Overflow>
          </Toolbar>
        </ToolRow>
        <FormulaBar>
          <ComboBox label="Cuadro de nombre" value="K16" width="123px" margin="0 8px 0 0" muted />
          <Tools items={['wizard', 'sum', 'equals']} />
          <FormulaField>
            <Mirror $mark="#000" aria-hidden="true">
              =DESVEST(<mark>B2:B16</mark>)
            </Mirror>
            <ClearInput aria-label="Línea de entrada" defaultValue="=DESVEST(B2:B16)" />
          </FormulaField>
        </FormulaBar>
      </Chrome>

      <SheetTable />
      <FunctionWizard />
    </Page>
  );
}
